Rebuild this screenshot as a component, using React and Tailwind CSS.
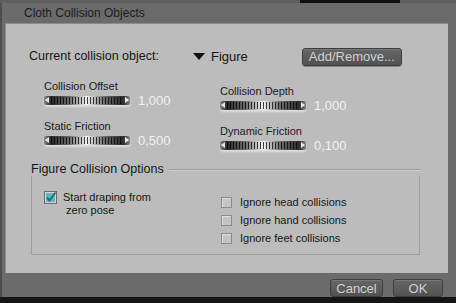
import React from 'react';

const font = { fontFamily: '"Liberation Sans", Arial, sans-serif' };

// chrome-look dial used for every numeric parameter
const Dial = ({ value }) => (
  <div className="flex items-center gap-[8px]">
    <div className="relative w-[86px] h-[9px] rounded-[2px] bg-[linear-gradient(90deg,#8a8a8a_0%,#2a2a2a_8%,#6e6e6e_30%,#f4f4f4_50%,#6e6e6e_70%,#2a2a2a_92%,#8a8a8a_100%)] shadow-[0_2px_2px_rgba(255,255,255,0.5)]">
      <div className="absolute left-[7px] right-[7px] top-[1px] bottom-[1px] bg-[repeating-linear-gradient(90deg,rgba(0,0,0,0.75)_0_1px,transparent_1px_3px)]" />
      <div className="absolute left-[1px] top-[1px] w-0 h-0 border-y-[3.5px] border-y-transparent border-r-[4px] border-r-[#e8e8e8]" />
      <div className="absolute right-[1px] top-[1px] w-0 h-0 border-y-[3.5px] border-y-transparent border-l-[4px] border-l-[#e8e8e8]" />
    </div>
    <span className="text-[13px] text-[#f2f2f2] leading-none">{value}</span>
  </div>
);

const Param = ({ label, value }) => (
  <div className="flex flex-col gap-[2px]">
    <span className="text-[11px] text-[#1a1a1a] leading-none">{label}</span>
    <Dial value={value} />
  </div>
);

const Check = ({ checked }) =>
  checked ? (
    <svg width="13" height="13" viewBox="0 0 13 13" className="shrink-0">
      <rect x="0.5" y="0.5" width="12" height="12" fill="#d8d8d8" stroke="#6a6a6a" />
      <rect x="2" y="2" width="9" height="9" fill="#5fb9c0" />
      <path d="M3 6.5 L5.5 9.5 L11.5 1.5" fill="none" stroke="#1f6f78" strokeWidth="2" />
    </svg>
  ) : (
    <div className="w-[11px] h-[11px] shrink-0 border border-[#8a8a8a] bg-[#c4c4c4] shadow-[inset_1px_1px_0_#e0e0e0]" />
  );

const Btn = ({ children, className }) => (
  <button className={`h-[18px] rounded-[3px] bg-[linear-gradient(#666,#525252)] border border-[#3e3e3e] shadow-[0_1px_0_#858585,inset_0_1px_0_#777] text-[13px] text-[#d2d2d2] leading-none ${className}`}>
    {children}
  </button>
);

export default function App() {
  return (
    <div className="w-[456px] h-[303px] bg-[#6b6b6b] flex flex-col overflow-hidden" style={font}>
      <div className="h-[3px] flex">
        <div className="w-[300px] bg-[#5e5e5e]" />
        <div className="w-[100px] bg-[#111]" />
        <div className="flex-1 bg-[#5e5e5e]" />
      </div>
      <div className="h-[20px] pl-[22px] flex items-center text-[12px] text-[#1c1c1c] border-l-2 border-[#4e4e4e]">
        Cloth Collision Objects
      </div>

      <div className="flex border-l-2 border-[#4e4e4e]">
        <div className="ml-[3px] w-[443px] h-[250px] bg-[#bcbcbc] border-l border-t border-[#8c8c8c] flex flex-col">
          {/* current object row */}
          <div className="mt-[23px] h-[19px] flex items-center text-[12.5px] text-[#161616]">
            <span className="ml-[23px] w-[164px]">Current collision object:</span>
            <div className="w-0 h-0 border-x-[6px] border-x-transparent border-t-[7px] border-t-[#111]" />
            <span className="ml-[6px] text-[13px]">Figure</span>
            <Btn className="ml-[54px] w-[100px]">Add/Remove...</Btn>
          </div>

          {/* parameters */}
          <div className="mt-[12px] flex">
            <div className="ml-[38px] w-[176px] flex flex-col gap-[14px] pt-[3px]">
              <Param label="Collision Offset" value="1,000" />
              <Param label="Static Friction" value="0,500" />
            </div>
            <div className="flex flex-col gap-[14px] pt-[8px]">
              <Param label="Collision Depth" value="1,000" />
              <Param label="Dynamic Friction" value="0,100" />
            </div>
          </div>

          {/* group */}
          <div className="mt-[10px] ml-[25px] w-[389px] flex flex-col">
            <div className="flex items-center h-[14px]">
              <span className="text-[12.5px] text-[#161616] leading-none">Figure Collision Options</span>
              <div className="flex-1 ml-[5px] border-t border-[#9c9c9c] shadow-[0_1px_0_#d0d0d0]" />
            </div>
            <div className="h-[79px] border-l border-r border-b border-[#9c9c9c] flex pt-[15px]">
              <div className="ml-[12px] w-[163px] flex gap-[6px]">
                <Check checked />
                <span className="text-[11px] text-[#161616] leading-[13px]">
                  Start draping from
                  <br />
                  &nbsp;zero pose
                </span>
              </div>
              <div className="ml-[14px] pt-[5px] flex flex-col gap-[6px]">
                {['Ignore head collisions', 'Ignore hand collisions', 'Ignore feet collisions'].map((t) => (
                  <div key={t} className="flex items-center gap-[8px] h-[12px]">
                    <Check />
                    <span className="text-[11px] text-[#161616]">{t}</span>
                  </div>
                ))}
              </div>
            </div>
          </div>
        </div>
      </div>

      {/* footer */}
      <div className="flex justify-end gap-[10px] pr-[13px] pt-[6px] h-[24px] border-l-2 border-[#4e4e4e]">
        <Btn className="w-[53px]">Cancel</Btn>
        <Btn className="w-[50px]">OK</Btn>
      </div>
      <div className="flex-1 bg-[#151515]" />
    </div>
  );
}
